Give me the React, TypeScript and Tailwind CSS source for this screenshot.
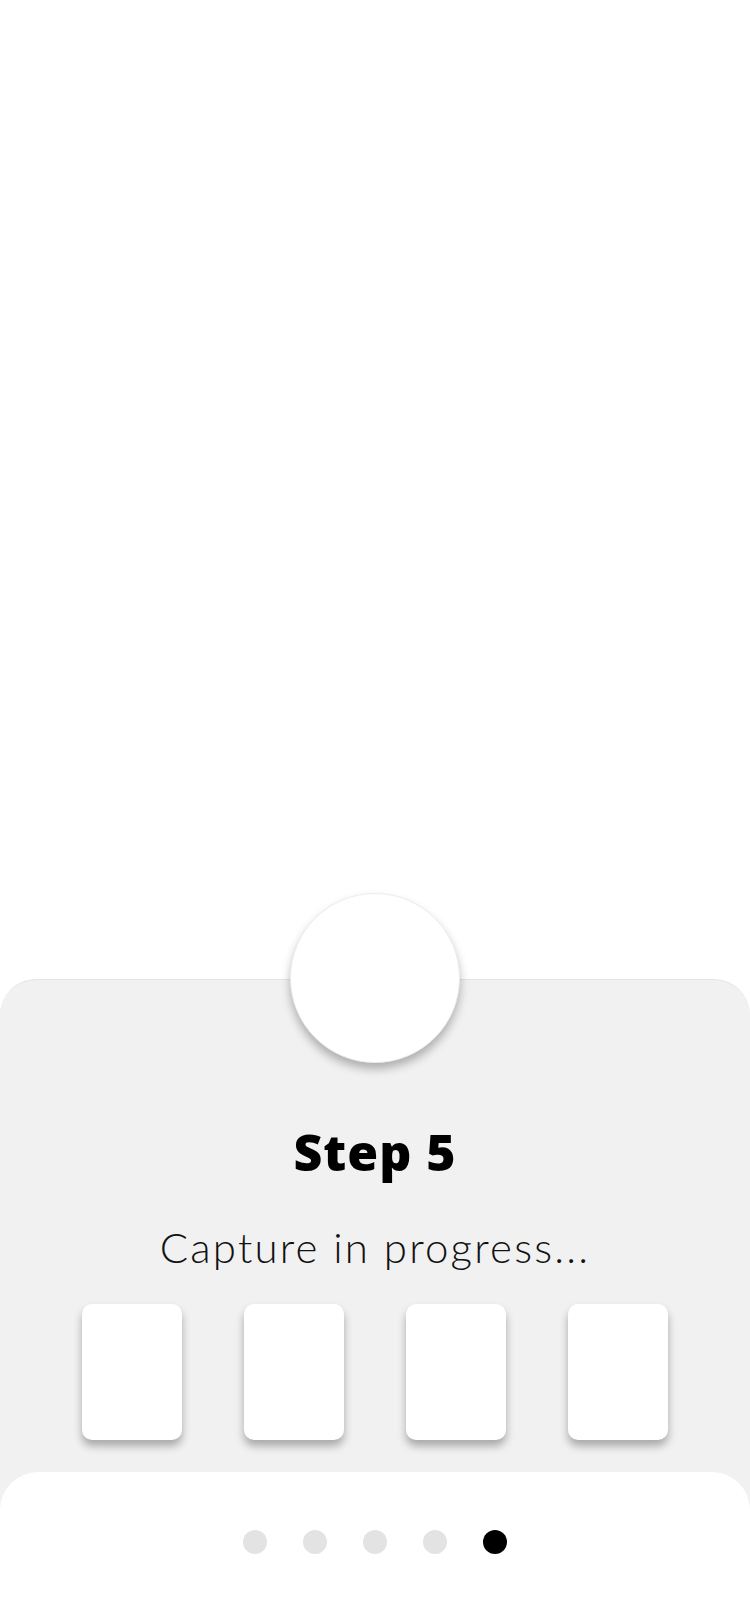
import React from 'react';

const steps = [1, 2, 3, 4, 5];
const frames = [0, 1, 2, 3];

export default function App() {
  const current = 5;

  return (
    <div className="w-[750px] h-[1624px] bg-white flex flex-col overflow-hidden" style={{ fontFamily: 'Lato, "Open Sans", sans-serif' }}>
      {/* camera area (blank) */}
      <div className="h-[979px] shrink-0" />

      {/* bottom sheet */}
      <div className="relative flex-1 flex flex-col items-center bg-[#f1f1f1] rounded-t-[36px] border-t border-[#e4e4e4]">
        {/* shutter button */}
        <div className="absolute -top-[87px] left-1/2 -translate-x-1/2 w-[170px] h-[170px] rounded-full bg-white border border-[#ededed] shadow-[0_6px_10px_rgba(0,0,0,0.28)]" />

        <h1 className="mt-[147px] text-[50px] leading-none font-extrabold tracking-[1px] text-black" style={{ fontFamily: '"Open Sans", Lato, sans-serif' }}>Step {current}</h1>
        <p className="mt-[49px] text-[42px] leading-none font-light tracking-[2.2px] text-[#111]">Capture in progress...</p>

        {/* captured frames */}
        <div className="mt-[36px] flex gap-[62px]">
          {frames.map((f) => (
            <div key={f} className="w-[100px] h-[136px] rounded-[10px] bg-white shadow-[0_6px_8px_rgba(0,0,0,0.3)]" />
          ))}
        </div>

        {/* pager */}
        <div className="mt-auto w-full h-[152px] bg-white rounded-t-[38px] flex justify-center pt-[58px]">
          <div className="flex gap-[36px] h-[24px]">
            {steps.map((s) => (
              <div key={s} className={s === current ? 'w-[24px] h-[24px] rounded-full bg-black' : 'w-[24px] h-[24px] rounded-full bg-[#e3e3e3]'} />
            ))}
          </div>
        </div>
      </div>
    </div>
  );
}
